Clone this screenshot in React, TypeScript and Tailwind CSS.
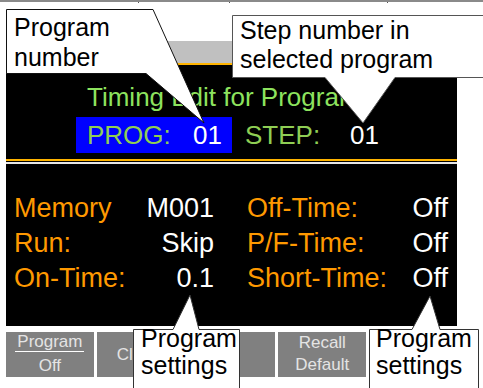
const rows = [
  { label: "Memory", value: "M001", label2: "Off-Time:", value2: "Off" },
  { label: "Run:", value: "Skip", label2: "P/F-Time:", value2: "Off" },
  { label: "On-Time:", value: "0.1", label2: "Short-Time:", value2: "Off" },
];

function Callouts() {
  return (
    <>
      <svg
        className="absolute inset-0 pointer-events-none"
        width={483}
        height={388}
        viewBox="0 0 483 388"
      >
        <polygon
          points="6.5,9.5 153,9.5 204,123 146,73.5 6.5,73.5"
          fill="#fff"
          stroke="#111"
          strokeWidth={1}
        />
        <polygon
          points="232.5,15.5 490,15.5 490,77.5 395,77.5 363,123 325,77.5 232.5,77.5"
          fill="#fff"
          stroke="#555"
          strokeWidth={1}
        />
        <polygon
          points="133.5,329.5 173,329.5 190,295 199,329.5 239.5,329.5 239.5,400 133.5,400"
          fill="#fff"
          stroke="#333"
          strokeWidth={1}
        />
        <polygon
          points="369.5,329.5 412,329.5 430,296 440,329.5 478.5,329.5 478.5,400 369.5,400"
          fill="#fff"
          stroke="#333"
          strokeWidth={1}
        />
      </svg>
      <div className="absolute left-[14px] top-[12px] text-[25px] leading-[30px] text-black">
        <div>Program</div>
        <div>number</div>
      </div>
      <div className="absolute left-[240px] top-[16px] text-[25px] leading-[29px] text-black">
        <div>Step number in</div>
        <div>selected program</div>
      </div>
      <div className="absolute left-[141px] top-[325px] text-[25px] leading-[27px] text-black">
        <div>Program</div>
        <div>settings</div>
      </div>
      <div className="absolute left-[376px] top-[325px] text-[25px] leading-[27px] text-black">
        <div>Program</div>
        <div>settings</div>
      </div>
    </>
  );
}

export default function App() {
  return (
    <div className="relative w-[483px] h-[388px] bg-white overflow-hidden font-['Liberation_Sans',Arial,sans-serif]">
      {/* cut-off table edge at top */}
      <div className="flex h-[3px] border-t-2 border-[#8a8a8a]">
        <div className="w-[139px] border-r border-[#555]" />
        <div className="w-[91px] border-r border-[#555]" />
        <div className="w-[158px] border-r border-[#555]" />
      </div>

      <div className="ml-[6px] w-[451px] mt-[38px]">
        <div className="h-[22px] bg-[#c0c0c0]" />
        <div className="h-[2px] bg-[#ffb400]" />

        <div className="h-[261px] bg-black pt-[19px]">
          <div className="pl-[81px] text-[26px] leading-none text-[#8de35e]">
            Timing Edit for Program
          </div>

          <div className="mt-[7px] flex items-center text-[26px] leading-[36px]">
            <div className="ml-[70px] w-[156px] h-[36px] bg-[#0000ff] pl-[11px] flex">
              <span className="w-[106px] text-[#8fce54]">PROG:</span>
              <span className="text-white">01</span>
            </div>
            <span className="ml-[13px] w-[105px] text-[#8fce54]">STEP:</span>
            <span className="text-white">01</span>
          </div>

          <div className="mt-[6px] h-[2px] bg-[#ffb400]" />
          <div className="mt-[1px] h-[2px] bg-[#e6e6e6]" />

          <div className="mt-[27px] pl-[8px] grid grid-cols-[200px_201px] gap-x-[33px] text-[27px] leading-[35px]">
            {rows.map((r) => (
              <div key={r.label} className="contents">
                <div className="flex justify-between">
                  <span className="text-[#ff9900]">{r.label}</span>
                  <span className="text-white">{r.value}</span>
                </div>
                <div className="flex justify-between">
                  <span className="text-[#ff9900]">{r.label2}</span>
                  <span className="text-white">{r.value2}</span>
                </div>
              </div>
            ))}
          </div>
        </div>

        <div className="mt-[6px] grid grid-cols-5 gap-[3px] h-[45px] text-[17px] text-[#e4e4e4]">
          <div className="bg-[#808080] flex flex-col items-center">
            <div className="leading-[19px] w-[69px] text-center border-b-[1.5px] border-white">
              Program
            </div>
            <div className="mt-[4px] leading-[20px]">Off</div>
          </div>
          <div className="bg-[#808080] flex items-center justify-start pl-[20px] leading-[20px]">
            Cl
          </div>
          <div className="bg-[#808080]" />
          <div className="bg-[#808080] flex flex-col items-center">
            <div className="leading-[20px] pt-[1px]">Recall</div>
            <div className="mt-[2px] leading-[20px]">Default</div>
          </div>
          <div className="bg-[#808080]" />
        </div>
      </div>

      <Callouts />
    </div>
  );
}
